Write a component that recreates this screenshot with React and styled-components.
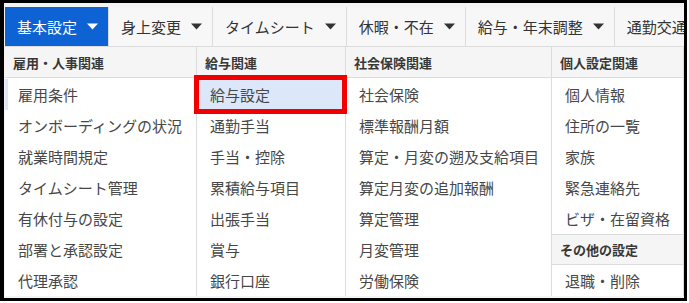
import styled, { createGlobalStyle } from "styled-components";

const GlobalStyle = createGlobalStyle`
  html, body {
    margin: 0;
    padding: 0;
    background: #fff;
    font-family: "Noto Sans CJK JP", "Noto Sans", sans-serif;
  }
`;

const Frame = styled.div`
  width: 687px;
  height: 301px;
  box-sizing: border-box;
  border-style: solid;
  border-color: #000;
  border-width: 3px 3px 3px 4px;
  background: #f4f4f4;
  padding: 4px 0 0 1px;
  overflow: hidden;
`;

const NavBar = styled.div`
  display: flex;
  height: 39px;
  background: #f7f7f7;
  border-bottom: 1px solid #dcdcdc;
  white-space: nowrap;
`;

const NavItem = styled.div`
  display: flex;
  align-items: center;
  gap: 10px;
  flex-shrink: 0;
  padding: 0 10px 0 12px;
  font-size: 15px;
  color: ${(p) => (p.$active ? "#fff" : "#333")};
  background: ${(p) => (p.$active ? "#0d62d4" : "transparent")};
  border-right: 1px solid #dcdcdc;
`;

const Caret = () => (
  <svg width="11" height="7" viewBox="0 0 11 7">
    <path d="M0 0.5h11L5.5 6.5z" fill="currentColor" />
  </svg>
);

const Panel = styled.div`
  display: grid;
  grid-template-columns: 192px 149px 206px 1fr;
  background: #fff;
`;

const Column = styled.div`
  display: flex;
  flex-direction: column;
  border-right: 1px solid #dcdcdc;
`;

const Header = styled.div`
  height: 30px;
  display: flex;
  align-items: center;
  padding-left: 8px;
  background: #f5f5f5;
  border-bottom: 1px solid #dcdcdc;
  font-size: 13px;
  font-weight: 700;
  color: #383838;
  white-space: nowrap;
`;

const List = styled.div`
  display: flex;
  flex-direction: column;
  padding-top: 1px;
`;

const SubHeader = styled(Header)`
  height: 31px;
  border-top: 1px solid #dcdcdc;
  box-sizing: border-box;
`;

const Item = styled.div`
  position: relative;
  height: 31px;
  display: flex;
  align-items: center;
  padding-left: ${(p) => (p.$marked ? "10px" : "13px")};
  font-size: 15px;
  color: #474747;
  white-space: nowrap;
  background: ${(p) => (p.$selected ? "#dce8f9" : "transparent")};
  border-left: ${(p) => (p.$marked ? "3px solid #dce8f9" : "none")};
`;

const RedBox = styled.div`
  position: absolute;
  top: -4px;
  bottom: -4px;
  left: -3px;
  right: -2px;
  border: 5px solid #f00000;
  pointer-events: none;
`;

const nav = ["基本設定", "身上変更", "タイムシート", "休暇・不在", "給与・年末調整", "通勤交通費"];

const columns = [
  {
    title: "雇用・人事関連",
    items: ["雇用条件", "オンボーディングの状況", "就業時間規定", "タイムシート管理", "有休付与の設定", "部署と承認設定", "代理承認"],
  },
  {
    title: "給与関連",
    items: ["給与設定", "通勤手当", "手当・控除", "累積給与項目", "出張手当", "賞与", "銀行口座"],
  },
  {
    title: "社会保険関連",
    items: ["社会保険", "標準報酬月額", "算定・月変の遡及支給項目", "算定月変の追加報酬", "算定管理", "月変管理", "労働保険"],
  },
];

const personal = ["個人情報", "住所の一覧", "家族", "緊急連絡先", "ビザ・在留資格"];

const App = () => {
  return (
    <>
      <GlobalStyle />
      <Frame>
        <NavBar>
          {nav.map((n, i) => (
            <NavItem key={n} $active={i === 0}>
              {n}
              {i < nav.length - 1 && <Caret />}
            </NavItem>
          ))}
        </NavBar>
        <Panel>
          {columns.map((col) => (
            <Column key={col.title}>
              <Header>{col.title}</Header>
              <List>
                {col.items.map((it) => (
                  <Item key={it} $selected={it === "給与設定"} $marked={it === "雇用条件"}>
                    {it}
                    {it === "給与設定" && <RedBox />}
                  </Item>
                ))}
              </List>
            </Column>
          ))}
          <Column>
            <Header>個人設定関連</Header>
            <List>
              {personal.map((it) => (
                <Item key={it}>{it}</Item>
              ))}
            </List>
            <SubHeader>その他の設定</SubHeader>
            <Item>退職・削除</Item>
          </Column>
        </Panel>
      </Frame>
    </>
  );
};

export default App;
